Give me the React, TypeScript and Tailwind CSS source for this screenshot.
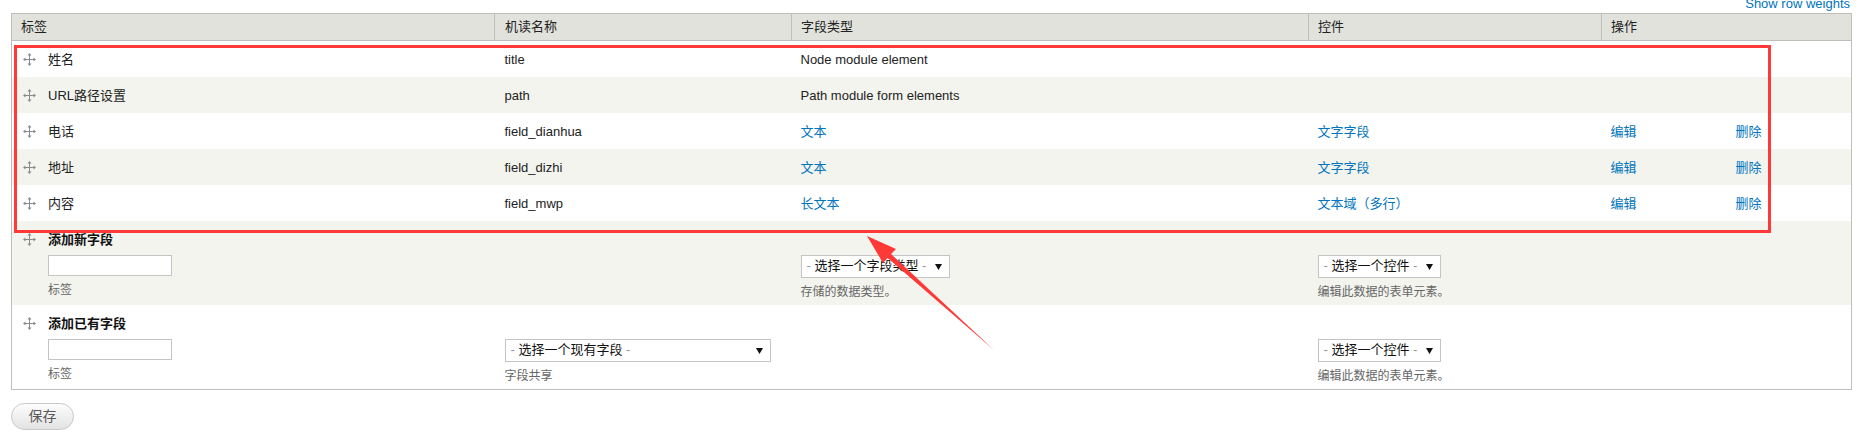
import React from "react";

// Drupal "manage fields" table with the red screenshot markup on top.

const font = "font-['Liberation_Sans','Noto_Sans_CJK_SC',sans-serif]";

type Row = {
  label: string;
  machine: string;
  type: string;
  typeLink?: boolean;
  widget?: string;
};

const rows: Row[] = [
  { label: "姓名", machine: "title", type: "Node module element" },
  { label: "URL路径设置", machine: "path", type: "Path module form elements" },
  { label: "电话", machine: "field_dianhua", type: "文本", typeLink: true, widget: "文字字段" },
  { label: "地址", machine: "field_dizhi", type: "文本", typeLink: true, widget: "文字字段" },
  { label: "内容", machine: "field_mwp", type: "长文本", typeLink: true, widget: "文本域（多行）" },
];

function Handle() {
  return (
    <svg width="13" height="13" viewBox="0 0 13 13" className="shrink-0">
      <g fill="#8a8a8a">
        <rect x="6" y="2" width="1" height="9" />
        <rect x="2" y="6" width="9" height="1" />
        <polygon points="6.5,0 4.5,2.5 8.5,2.5" />
        <polygon points="6.5,13 4.5,10.5 8.5,10.5" />
        <polygon points="0,6.5 2.5,4.5 2.5,8.5" />
        <polygon points="13,6.5 10.5,4.5 10.5,8.5" />
      </g>
    </svg>
  );
}

function Select({ text, className }: { text: string; className: string }) {
  return (
    <div className={`flex items-center justify-between h-[23px] border border-[#c4c4c4] bg-white pl-[5px] pr-[7px] text-[13px] text-[#111] ${className}`}>
      <span>
        <span className="text-[#999]">-</span> {text} <span className="text-[#999]">-</span>
      </span>
      <svg width="7" height="7" viewBox="0 0 7 7">
        <polygon points="0,1 7,1 3.5,7" fill="#111" />
      </svg>
    </div>
  );
}

function Desc({ children }: { children: React.ReactNode }) {
  return <div className="mt-[6px] leading-[16px] text-[12px] text-[#666]">{children}</div>;
}

function AddRow({ title, bg, machine, type, widget }: {
  title: string;
  bg: string;
  machine?: React.ReactNode;
  type?: React.ReactNode;
  widget: React.ReactNode;
}) {
  return (
    <tr className={bg}>
      <td className="align-top pl-[11px] pt-[10px] pb-[7px]">
        <div className="flex items-center h-[18px]">
          <Handle />
          <span className="ml-[12px] font-bold text-[13px] text-[#111]">{title}</span>
        </div>
        <div className="ml-[25px] mt-[6px] w-[124px] h-[21px] border border-[#c4c4c4] bg-white" />
        <div className="ml-[25px]"><Desc>标签</Desc></div>
      </td>
      <td className="align-top pl-[10px] pt-[34px]">{machine}</td>
      <td className="align-top pl-[9px] pt-[34px]">{type}</td>
      <td className="align-top pl-[9px] pt-[34px]">{widget}</td>
      <td colSpan={2} />
    </tr>
  );
}

export default function App() {
  const link = "text-[#0074bd]";
  return (
    <div className={`relative w-[1864px] h-[438px] overflow-hidden bg-white text-[13px] text-[#222] ${font}`}>
      <div className="h-[13px] flex justify-end pr-[14px] overflow-hidden">
        <span className={`-mt-[4px] leading-[16px] ${link}`}>Show row weights</span>
      </div>

      <table className="ml-[11px] w-[1840px] table-fixed border-collapse border border-[#bebfb9]">
        <colgroup>
          <col className="w-[483px]" />
          <col className="w-[297px]" />
          <col className="w-[517px]" />
          <col className="w-[293px]" />
          <col className="w-[124px]" />
          <col className="w-[126px]" />
        </colgroup>
        <thead>
          <tr className="bg-[#e1e2dc]">
            <th className="h-[27px] p-0 pl-[9px] text-left font-normal border-b border-r border-[#bebfb9]">标签</th>
            <th className="h-[27px] p-0 pl-[10px] text-left font-normal border-b border-r border-[#bebfb9]">机读名称</th>
            <th className="h-[27px] p-0 pl-[9px] text-left font-normal border-b border-r border-[#bebfb9]">字段类型</th>
            <th className="h-[27px] p-0 pl-[9px] text-left font-normal border-b border-r border-[#bebfb9]">控件</th>
            <th colSpan={2} className="h-[27px] p-0 pl-[9px] text-left font-normal border-b border-[#bebfb9]">操作</th>
          </tr>
        </thead>
        <tbody>
          {rows.map((r, i) => (
            <tr key={r.machine} className={i % 2 ? "bg-[#f3f4ee]" : "bg-white"}>
              <td className="h-[36px] p-0 pl-[11px] pt-[2px]">
                <div className="flex items-center">
                  <Handle />
                  <span className="ml-[12px]">{r.label}</span>
                </div>
              </td>
              <td className="p-0 pl-[10px] pt-[2px]">{r.machine}</td>
              <td className="p-0 pl-[9px] pt-[2px]">
                {r.typeLink ? <span className={link}>{r.type}</span> : r.type}
              </td>
              <td className="p-0 pl-[9px] pt-[2px]">{r.widget && <span className={link}>{r.widget}</span>}</td>
              <td className="p-0 pl-[9px] pt-[2px]">{r.widget && <span className={link}>编辑</span>}</td>
              <td className="p-0 pl-[10px] pt-[2px]">{r.widget && <span className={link}>删除</span>}</td>
            </tr>
          ))}
          <AddRow
            title="添加新字段"
            bg="bg-[#f3f4ee]"
            type={
              <>
                <Select text="选择一个字段类型" className="w-[149px]" />
                <Desc>存储的数据类型。</Desc>
              </>
            }
            widget={
              <>
                <Select text="选择一个控件" className="w-[123px]" />
                <Desc>编辑此数据的表单元素。</Desc>
              </>
            }
          />
          <AddRow
            title="添加已有字段"
            bg="bg-white"
            machine={
              <>
                <Select text="选择一个现有字段" className="w-[266px]" />
                <Desc>字段共享</Desc>
              </>
            }
            widget={
              <>
                <Select text="选择一个控件" className="w-[123px]" />
                <Desc>编辑此数据的表单元素。</Desc>
              </>
            }
          />
        </tbody>
      </table>

      <button className="ml-[11px] mt-[13px] w-[63px] h-[27px] rounded-full border border-[#c8c8c8] bg-gradient-to-b from-[#fdfdfd] to-[#e3e3e3] text-[14px] text-[#5a5a5a]">
        保存
      </button>

      {/* screenshot annotation */}
      <div className="absolute left-[14px] top-[45px] w-[1757px] h-[188px] border-[3px] border-[#ff3838]" />
      <svg className="absolute left-0 top-0 pointer-events-none" width="1864" height="438">
        <polygon
          points="994,350 891,254 896,249 867,236 883,263 887.6,257.9"
          fill="#ff3838"
        />
      </svg>
    </div>
  );
}
